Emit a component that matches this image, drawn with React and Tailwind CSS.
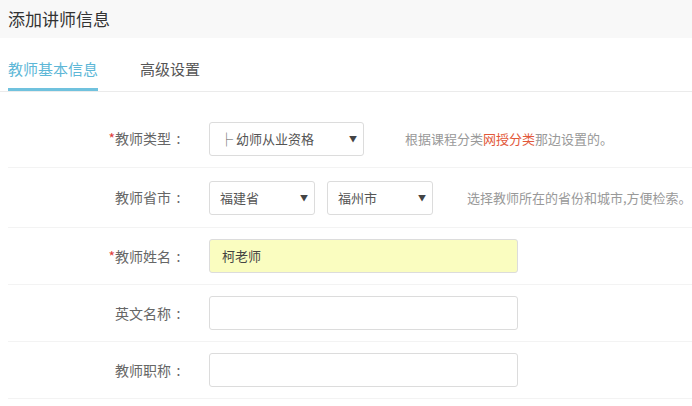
import React from "react";

const font = { fontFamily: '"Noto Sans CJK SC", "Noto Sans", sans-serif' };

const Label = ({ required, children }) => (
  <div className="w-[178px] shrink-0 text-right text-[14px] text-[#666]">
    {required && <span className="text-[#e0403a]">*</span>}
    {children}
    <span className="inline-block w-[15px] text-center">:</span>
  </div>
);

const FakeSelect = ({ value, width }) => (
  <div
    className={`${width} h-[34px] flex items-center justify-between border border-[#dcdcdc] rounded-[3px] bg-white pl-[10px] pr-[6px] text-[13px] text-[#555]`}
  >
    <span>{value}</span>
    <span className="text-[8px] text-[#444]">▼</span>
  </div>
);

const TextInput = ({ value, filled }) => (
  <div
    className={`w-[309px] h-[34px] flex items-center border border-[#dcdcdc] rounded-[3px] px-[12px] text-[13px] text-[#444] ${
      filled ? "bg-[#fafdc0]" : "bg-white"
    }`}
  >
    {value}
  </div>
);

const Row = ({ h, children }) => (
  <div className={`${h} flex items-center gap-[23px] border-b border-[#f3f3f3]`}>{children}</div>
);

export default function App() {
  return (
    <div className="w-[692px] h-[406px] bg-white overflow-hidden" style={font}>
      <div className="h-[38px] bg-[#f8f8f8] flex items-center px-2 text-[17px] text-[#333]">
        添加讲师信息
      </div>

      <div className="h-[54px] flex items-end border-b border-[#ebebeb]">
        <div className="ml-2 h-[33px] border-b-[3px] border-[#70c2de] text-[15px] text-[#5db7d7] leading-[22px]">
          教师基本信息
        </div>
        <div className="ml-[42px] h-[33px] text-[15px] text-[#555] leading-[22px]">高级设置</div>
      </div>

      <div className="pl-2 pt-[18px]">
        <Row h="h-[58px]">
          <Label required>教师类型</Label>
          <div className="flex items-center gap-[41px]">
            <FakeSelect value="├ 幼师从业资格" width="w-[155px]" />
            <div className="text-[13px] text-[#999]">
              根据课程分类<span className="text-[#e2583a]">网授分类</span>那边设置的。
            </div>
          </div>
        </Row>
        <Row h="h-[60px]">
          <Label>教师省市</Label>
          <div className="flex items-center">
            <FakeSelect value="福建省" width="w-[106px]" />
            <div className="ml-[12px]">
              <FakeSelect value="福州市" width="w-[106px]" />
            </div>
            <div className="ml-[34px] text-[13px] text-[#999]">选择教师所在的省份和城市,方便检索。</div>
          </div>
        </Row>
        <Row h="h-[57px]">
          <Label required>教师姓名</Label>
          <TextInput value="柯老师" filled />
        </Row>
        <Row h="h-[57px]">
          <Label>英文名称</Label>
          <TextInput />
        </Row>
        <Row h="h-[57px]">
          <Label>教师职称</Label>
          <TextInput />
        </Row>
      </div>
    </div>
  );
}
